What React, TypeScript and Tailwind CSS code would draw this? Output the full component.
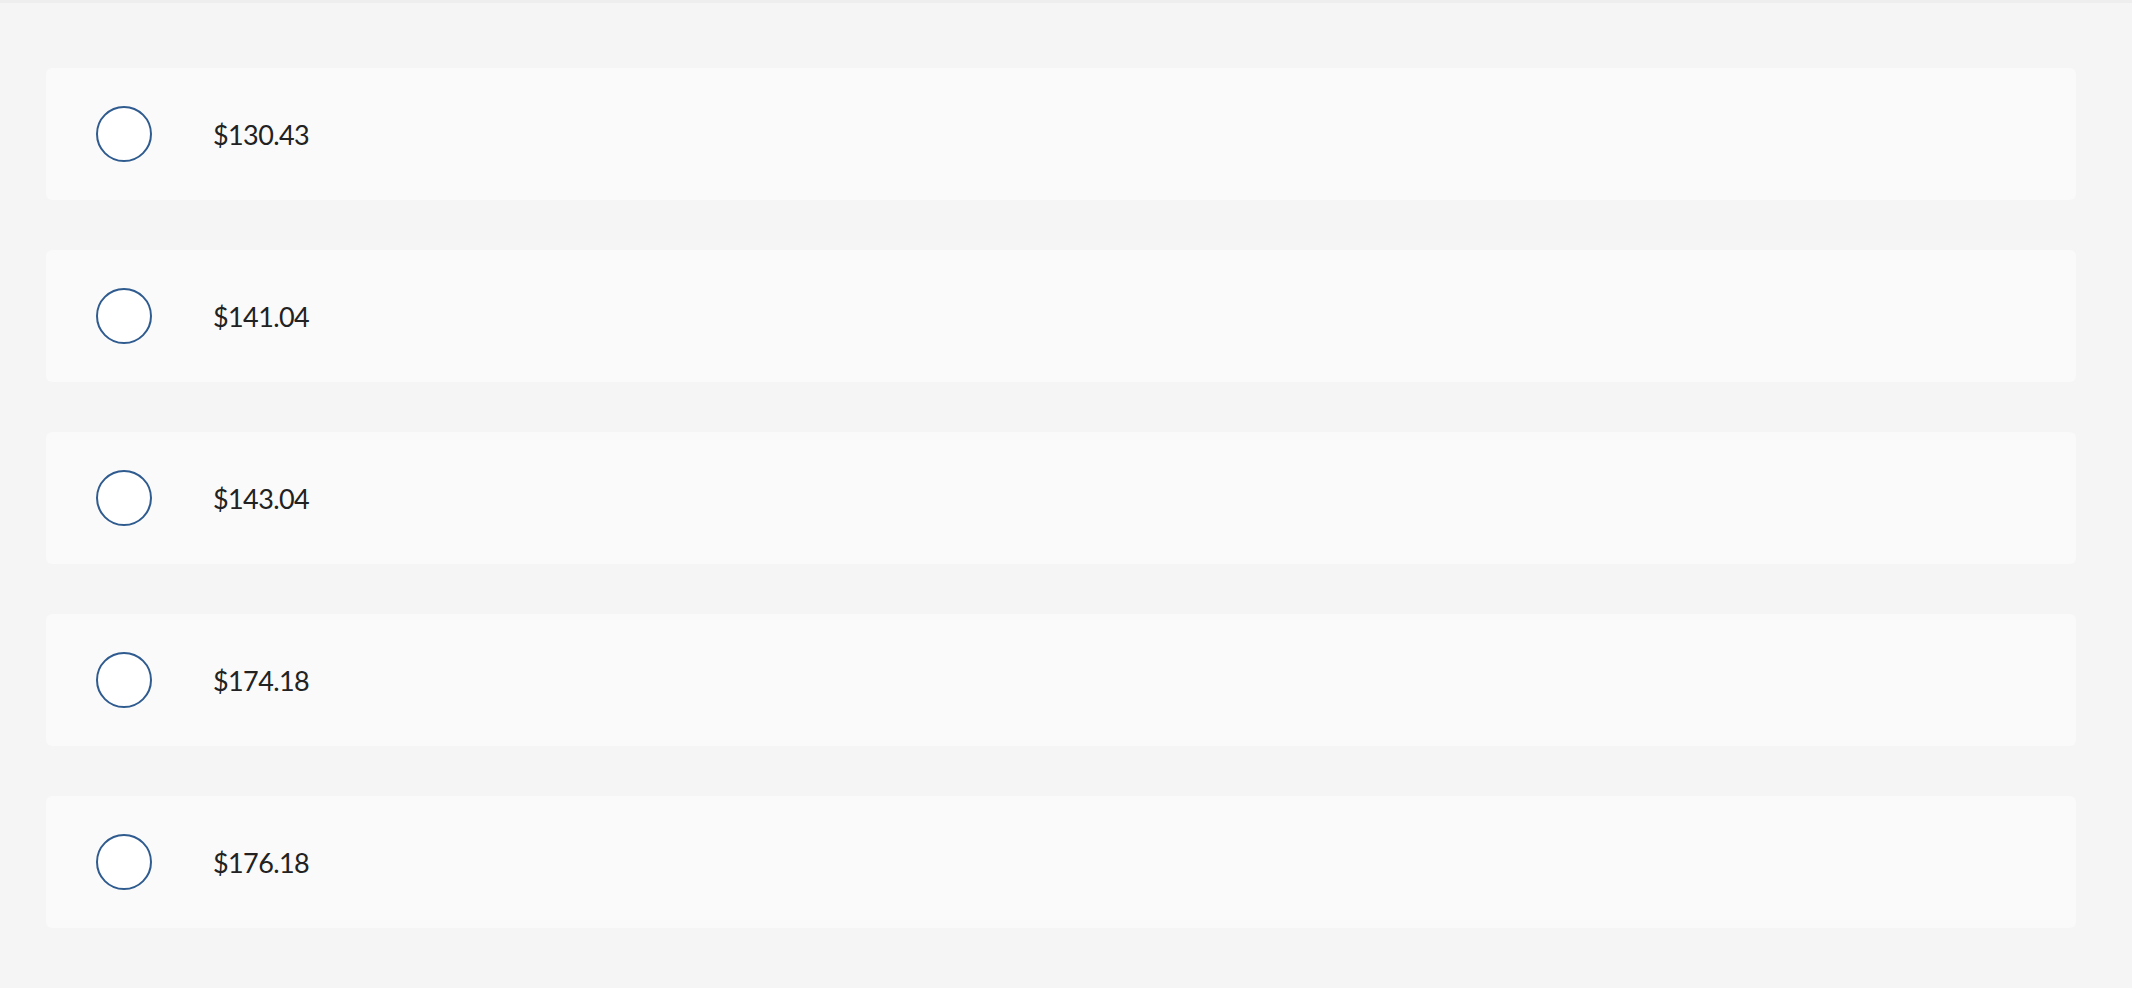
const options = ["$130.43", "$141.04", "$143.04", "$174.18", "$176.18"];

export default function App() {
  return (
    <div className="flex h-[988px] w-[2154px] bg-white" style={{ fontFamily: "Lato, 'Open Sans', sans-serif" }}>
      <div className="flex w-[2132px] flex-col bg-[#f5f5f5]">
        <div className="h-[3px] w-full bg-[#eeeeee]" />
        <div className="flex flex-col gap-[50px] pl-[46px] pr-[56px] pt-[65px]">
          {options.map((price) => (
            <label
              key={price}
              className="flex h-[132px] cursor-pointer items-center rounded-[6px] bg-[#fafafa] pl-[50px]"
            >
              <span className="h-[56px] w-[56px] shrink-0 rounded-full border-2 border-[#2f5b8f] bg-white" />
              <span className="ml-[61px] text-[27px] leading-none tracking-[-0.6px] text-[#222222]">{price}</span>
            </label>
          ))}
        </div>
      </div>
    </div>
  );
}
